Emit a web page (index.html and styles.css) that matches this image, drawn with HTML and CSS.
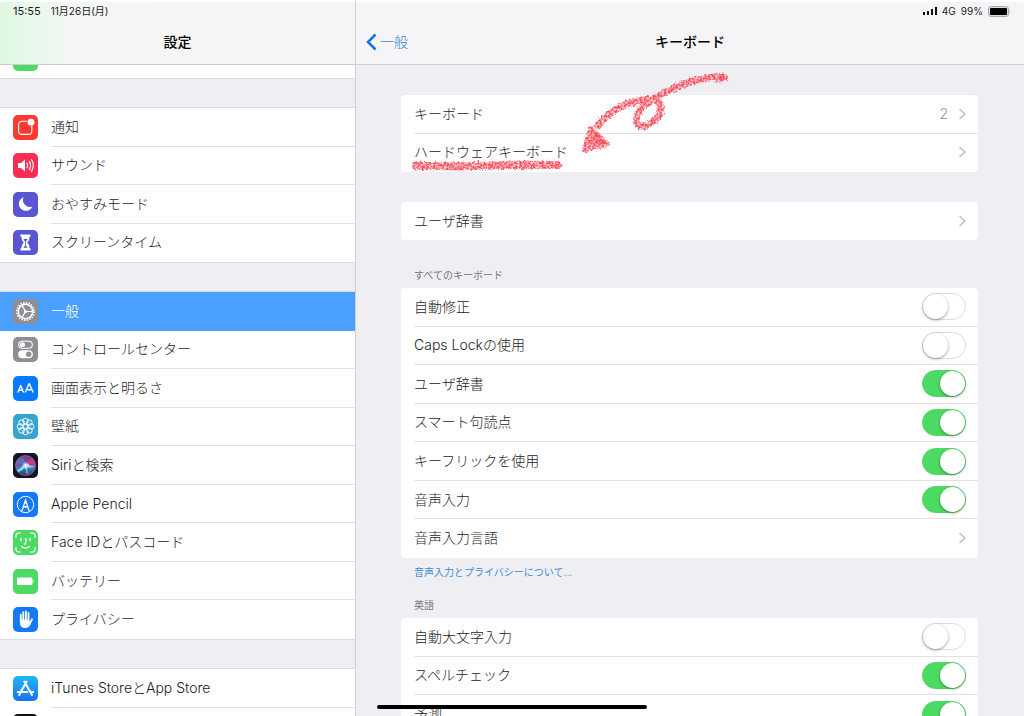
FILE: index.html
```html
<!DOCTYPE html>
<html lang="ja">
<head>
<meta charset="utf-8">
<meta name="viewport" content="width=device-width, initial-scale=1">
<title>設定</title>
<link rel="stylesheet" href="styles.css">
</head>
<body>
<div class="app">
  <aside class="sidebar">
    <header class="bar bar-side">
      <div class="status"><span class="clock">15:55</span><span>11月26日(月)</span></div>
      <h1 class="title">設定</h1>
    </header>
    <nav class="menu">
      <div class="list list-clipped" aria-hidden="true">
        <svg class="icon" viewBox="0 0 25 25"><rect width="25" height="25" rx="5" fill="#4cd964"/></svg>
      </div>
      <div class="list rows-4">
        <a class="item" href="#"><svg class="icon" viewBox="0 0 25 25"><rect width="25" height="25" rx="5" fill="#fb3b30"/><path d="M14.2 6.2H9A3.4 3.4 0 0 0 5.600 9.600V16A3.400 3.400 0 0 0 9 19.400H15.400A3.400 3.400 0 0 0 18.800 16V11" fill="none" stroke="#fff" stroke-width="1.100"/><circle cx="18" cy="7.200" r="3.400" fill="#fff"/></svg><span class="label">通知</span></a>
        <a class="item" href="#"><svg class="icon" viewBox="0 0 25 25"><rect width="25" height="25" rx="5" fill="#fc2d55"/><path d="M5 10h3l4-3.500v12L8 15H5z" fill="#fff"/><path d="M14 10.200q1.500 2.300 0 4.600M16.300 8.400q2.600 4.100 0 8.200M18.500 6.700q3.800 5.800 0 11.600" fill="none" stroke="#fff" stroke-width="1.200" stroke-linecap="round"/></svg><span class="label">サウンド</span></a>
        <a class="item" href="#"><svg class="icon" viewBox="0 0 25 25"><rect width="25" height="25" rx="5" fill="#5a55d2"/><path d="M10.500 5.300A7 7 0 1 0 19.400 14.500A7 7 0 0 1 10.500 5.300Z" fill="#fff"/></svg><span class="label">おやすみモード</span></a>
        <a class="item" href="#"><svg class="icon" viewBox="0 0 25 25"><rect width="25" height="25" rx="5" fill="#5a55d2"/><path d="M7.500 4.500h10v2.300h-1c0 2.700-.6 4.100-2.300 5.700 1.700 1.600 2.300 3 2.300 5.700h1v2.300h-10v-2.300h1c0-2.700.6-4.100 2.300-5.700-1.700-1.600-2.300-3-2.300-5.700h-1z" fill="#fff"/><path d="M10.500 9h4c-.3 1-.8 1.700-1.600 2.400v4.400l1.800 2h-4.400l1.800-2v-4.400c-.8-.7-1.300-1.400-1.600-2.400z" fill="#5a55d2"/></svg><span class="label">スクリーンタイム</span></a>
      </div>
      <div class="list rows-9">
        <a class="item item-selected" href="#" aria-current="page"><svg class="icon" viewBox="0 0 25 25"><rect width="25" height="25" rx="5" fill="#8e8e93"/><g fill="none" stroke="#fff"><circle cx="12.500" cy="12.500" r="8.700" stroke-width="1.700" stroke-dasharray="1.470 1.263"/><circle cx="12.500" cy="12.500" r="7.200" stroke-width="1.500"/><path d="M12.500 12.500H19.500M12.500 12.500L9 6.400M12.500 12.500L9 18.600" stroke-width="1.200"/></g><circle cx="12.500" cy="12.500" r="1.500" fill="#fff"/></svg><span class="label">一般</span></a>
        <a class="item" href="#"><svg class="icon" viewBox="0 0 25 25"><rect width="25" height="25" rx="5" fill="#8e8e93"/><rect x="5.700" y="4.200" width="13.600" height="7" rx="3.500" fill="none" stroke="#fff" stroke-width="1.100"/><circle cx="9.500" cy="7.700" r="2.500" fill="#fff"/><rect x="5.200" y="13.200" width="14.600" height="8" rx="4" fill="#fff"/><circle cx="15.700" cy="17.200" r="2.700" fill="#8e8e93"/></svg><span class="label">コントロールセンター</span></a>
        <a class="item" href="#"><svg class="icon" viewBox="0 0 25 25"><rect width="25" height="25" rx="5" fill="#087aff"/><path d="M4.800 16.500L7.700 9.500L10.600 16.500M5.700 14.300H9.700M12.200 16.500L16.200 7.500L20.200 16.500M13.400 13.700H19" fill="none" stroke="#fff" stroke-width="1.400" stroke-linejoin="round"/></svg><span class="label">画面表示と明るさ</span></a>
        <a class="item" href="#"><svg class="icon" viewBox="0 0 25 25"><rect width="25" height="25" rx="5" fill="#35a5cf"/><g fill="none" stroke="#fff" stroke-width="1"><circle cx="12.500" cy="12.500" r="2.200"/><circle cx="12.500" cy="7" r="2.800"/><circle cx="16.400" cy="8.600" r="2.800"/><circle cx="18" cy="12.500" r="2.800"/><circle cx="16.400" cy="16.400" r="2.800"/><circle cx="12.500" cy="18" r="2.800"/><circle cx="8.600" cy="16.400" r="2.800"/><circle cx="7" cy="12.500" r="2.800"/><circle cx="8.600" cy="8.600" r="2.800"/></g></svg><span class="label">壁紙</span></a>
        <a class="item" href="#"><svg class="icon" viewBox="0 0 25 25"><defs><linearGradient id="siri" x1="0" y1="0" x2="0" y2="1"><stop offset="0" stop-color="#6a3f86"/><stop offset=".4" stop-color="#a83a97"/><stop offset=".65" stop-color="#2a86b5"/><stop offset="1" stop-color="#2b3566"/></linearGradient><radialGradient id="glow"><stop offset="0" stop-color="#fff"/><stop offset=".35" stop-color="#d5f4ff" stop-opacity=".7"/><stop offset="1" stop-color="#fff" stop-opacity="0"/></radialGradient></defs><rect width="25" height="25" rx="5" fill="#161329"/><circle cx="12.500" cy="12.500" r="10" fill="url(#siri)" stroke="#a78bba" stroke-width=".6"/><path d="M3 10Q6 4 11 5L12.500 12Z" fill="#2f9ad0" opacity=".6"/><path d="M14 12L18 5Q22 8 22 12Z" fill="#e23b86" opacity=".6"/><path d="M4 17.500Q9 14 11.500 11L14 11Q18 13 22 13.500Q17 15.500 14 14L14.500 21.500L12 14.500Q8 18.500 5 19Z" fill="#8fe6f2" opacity=".85"/><path d="M14 14L15.500 21.500L12.500 20Z" fill="#f06db5" opacity=".7"/><circle cx="12.800" cy="12.400" r="4" fill="url(#glow)"/></svg><span class="label">Siriと検索</span></a>
        <a class="item" href="#"><svg class="icon" viewBox="0 0 25 25"><rect width="25" height="25" rx="5" fill="#1579f5"/><circle cx="12.500" cy="12.500" r="8.200" fill="none" stroke="#fff" stroke-width="1"/><path d="M8.800 19.300L12.500 8L16.200 19.300M10.300 15.300q1.100-1.500 2.200 0q1.100-1.500 2.200 0" fill="none" stroke="#fff" stroke-width="1.200"/><path d="M12.500 7l1.400 4.800h-2.800z" fill="#fff"/></svg><span class="label">Apple Pencil</span></a>
        <a class="item" href="#"><svg class="icon" viewBox="0 0 25 25"><rect width="25" height="25" rx="5" fill="#4cd964"/><g fill="none" stroke="#fff" stroke-width="1.200" stroke-linecap="round"><path d="M3 7.500V5.500Q3 3 5.500 3H7.500M17.500 3H19.500Q22 3 22 5.500V7.500M22 17.500V19.500Q22 22 19.500 22H17.500M7.500 22H5.500Q3 22 3 19.500V17.500"/><path d="M8 8.500V10.500M17 8.500V10.500M12.800 8.500V13Q12.800 14 11.500 14M8.500 16.600Q12.500 19.700 16.500 16.600" stroke-width="1.300"/></g></svg><span class="label">Face IDとパスコード</span></a>
        <a class="item" href="#"><svg class="icon" viewBox="0 0 25 25"><rect width="25" height="25" rx="5" fill="#4cd964"/><rect x="4" y="8.500" width="15.500" height="7.500" rx="1" fill="#fff"/><path d="M20.200 10.600q1.600 1.600 0 3.300z" fill="#fff"/></svg><span class="label">バッテリー</span></a>
        <a class="item" href="#"><svg class="icon" viewBox="0 0 25 25"><rect width="25" height="25" rx="5" fill="#1579f5"/><g stroke="#fff" stroke-width="1.800" stroke-linecap="round" fill="none"><path d="M7.800 7.600V15M10.300 5.200V14M12.900 4.500V14M15.500 6V15M19 12.300L16.500 17"/></g><path d="M6.900 12.500H16.400V15L18.200 13.700Q17.500 21 12.500 21Q6.900 21 6.900 15.500Z" fill="#fff"/></svg><span class="label">プライバシー</span></a>
      </div>
      <div class="list rows-2">
        <a class="item" href="#"><svg class="icon" viewBox="0 0 25 25"><defs><linearGradient id="store" x1="0" y1="0" x2="0" y2="1"><stop offset="0" stop-color="#1fb7f7"/><stop offset="1" stop-color="#1b72ec"/></linearGradient></defs><rect width="25" height="25" rx="5" fill="url(#store)"/><path d="M13.700 5.500L7.800 15.800M11.300 5.500L19 18.900M4.800 15.900H14.200M17.300 15.900H20.200M7 17.500L6.200 18.900" fill="none" stroke="#fff" stroke-width="2" stroke-linecap="round"/></svg><span class="label">iTunes StoreとApp Store</span></a>
        <div class="item" aria-hidden="true"><svg class="icon" viewBox="0 0 25 25"><rect width="25" height="25" rx="5" fill="#111"/></svg><span class="label"></span></div>
      </div>
    </nav>
  </aside>

  <main class="detail">
    <header class="bar">
      <div class="status status-right">
        <svg class="signal" viewBox="0 0 14 8"><path d="M0 5h2v3H0zM4 4h2v4H4zM8 2h2v6H8zM12 0h2v8h-2z" fill="#111"/></svg>
        <span>4G</span><span>99%</span>
        <svg class="battery" viewBox="0 0 23 11"><rect x=".5" y=".5" width="20" height="10" rx="2.500" fill="#ddd" stroke="#aaa"/><rect x="2" y="2" width="17" height="7" rx="1" fill="#000"/><path d="M21.500 4q1.500 1.500 0 3z" fill="#999"/></svg>
      </div>
      <div class="headline">
        <a class="back" href="#"><svg class="back-arrow" viewBox="0 0 11 18"><path d="M9.500 1.500L2 9L9.500 16.500" fill="none" stroke="#1077df" stroke-width="2.500"/></svg>一般</a>
        <h2 class="title">キーボード</h2>
      </div>
    </header>

    <div class="content">
      <section class="card card-marked rows-2">
        <a class="row" href="#"><span>キーボード</span><span class="value">2</span><svg class="chevron" viewBox="0 0 8 12"><path d="M1.500 1L7 6L1.500 11" fill="none" stroke="#bdbdc2" stroke-width="1.500"/></svg></a>
        <a class="row" href="#"><span>ハードウェアキーボード</span><svg class="chevron" viewBox="0 0 8 12"><path d="M1.500 1L7 6L1.500 11" fill="none" stroke="#bdbdc2" stroke-width="1.500"/></svg></a>
        <svg class="crayon" viewBox="401 65 340 115" aria-hidden="true">
          <defs><filter id="chalk" filterUnits="userSpaceOnUse" x="401" y="65" width="340" height="115">
            <feTurbulence type="fractalNoise" baseFrequency=".45" numOctaves="2" seed="7" result="n"/>
            <feDisplacementMap in="SourceGraphic" in2="n" scale="5" xChannelSelector="R" yChannelSelector="G" result="d"/>
            <feColorMatrix in="n" type="matrix" values="0 0 0 0 0  0 0 0 0 0  0 0 0 0 0  0 0 0 2 -.3" result="m"/>
            <feComposite in="d" in2="m" operator="in"/>
            <feGaussianBlur stdDeviation=".5"/>
          </filter></defs>
          <g filter="url(#chalk)" fill="none" stroke="#f5515f" stroke-linecap="round" stroke-linejoin="round">
            <path d="M723 77C700 76 676 86 656 97C641 105 633 117 638 124C644 131 661 119 661 108C661 98 648 98 638 101C620 105 606 114 598 126" stroke-width="7"/>
            <path d="M716 77.500L724 77.500" stroke-width="8"/>
            <path d="M591 129L606 144L585 149Z" fill="#f5515f" stroke-width="6"/>
            <path d="M416 165.500C450 168 500 164 558 165" stroke-width="8"/>
          </g>
          <path d="M592 129L607 144L598 146Z" fill="#f53b4c" opacity=".4"/>
          <circle cx="722" cy="78" r="3" fill="#f53b4c" opacity=".4"/>
        </svg>
      </section>

      <section class="card rows-1">
        <a class="row" href="#"><span>ユーザ辞書</span><svg class="chevron" viewBox="0 0 8 12"><path d="M1.500 1L7 6L1.500 11" fill="none" stroke="#bdbdc2" stroke-width="1.500"/></svg></a>
      </section>

      <h3 class="caption">すべてのキーボード</h3>
      <section class="card rows-7">
        <label class="row"><span>自動修正</span><input class="switch" type="checkbox" role="switch"></label>
        <label class="row"><span>Caps Lockの使用</span><input class="switch" type="checkbox" role="switch"></label>
        <label class="row"><span>ユーザ辞書</span><input class="switch" type="checkbox" role="switch" checked></label>
        <label class="row"><span>スマート句読点</span><input class="switch" type="checkbox" role="switch" checked></label>
        <label class="row"><span>キーフリックを使用</span><input class="switch" type="checkbox" role="switch" checked></label>
        <label class="row"><span>音声入力</span><input class="switch" type="checkbox" role="switch" checked></label>
        <a class="row" href="#"><span>音声入力言語</span><svg class="chevron" viewBox="0 0 8 12"><path d="M1.500 1L7 6L1.500 11" fill="none" stroke="#bdbdc2" stroke-width="1.500"/></svg></a>
      </section>
      <a class="footnote" href="#">音声入力とプライバシーについて...</a>

      <h3 class="caption caption-near">英語</h3>
      <section class="card rows-3">
        <label class="row"><span>自動大文字入力</span><input class="switch" type="checkbox" role="switch"></label>
        <label class="row"><span>スペルチェック</span><input class="switch" type="checkbox" role="switch" checked></label>
        <label class="row"><span>予測</span><input class="switch" type="checkbox" role="switch" checked></label>
      </section>
    </div>
  </main>
  <div class="home-indicator"></div>
</div>
</body>
</html>
```
FILE: styles.css
```css
* {
  box-sizing: border-box;
}

body {
  margin: 0;
  color: #1c1c1e;
  background: #eeeef3;
  font-family: Inter, "Noto Sans CJK JP", sans-serif;
  font-size: 14px;
  font-weight: 300;
  line-height: 20px;
}

a {
  color: inherit;
  text-decoration: none;
}

h1, h2, h3 {
  margin: 0;
  font: inherit;
}

svg {
  display: block;
  flex: none;
}

.app {
  position: relative;
  display: flex;
  height: 100vh;
  overflow: hidden;
}

.sidebar {
  display: flex;
  flex-direction: column;
  flex: 0 0 356px;
  border-right: 1px solid #cfcfd4;
}

.detail {
  display: flex;
  flex-direction: column;
  flex: 1;
  min-width: 0;
}

/* Top bars */
.bar {
  flex: none;
  background: #f5f5f7;
  border-top: 2px solid #fff;
  border-bottom: 1px solid #cdcdd3;
}

.bar-side {
  background: linear-gradient(90deg, #dff8e4 0, #e6f8ea 30px, #f4f6f4 68px, #f6f6f6 100%);
}

.status {
  display: flex;
  align-items: center;
  gap: 10px;
  height: 18px;
  padding: 0 13px;
  font-size: 10px;
  font-weight: 400;
}

.clock {
  font-size: 11px;
}

.status-right {
  justify-content: flex-end;
  gap: 5px;
}

.signal {
  width: 14px;
  height: 8px;
}

.battery {
  width: 23px;
  height: 11px;
}

.title {
  color: #000;
  font-weight: 500;
  line-height: 44px;
  text-align: center;
}

.headline {
  position: relative;
}

.back {
  position: absolute;
  left: 10px;
  top: 0;
  display: flex;
  align-items: center;
  gap: 3px;
  height: 44px;
  color: #2f83cf;
}

.back-arrow {
  width: 11px;
  height: 18px;
}

/* Sidebar menu */
.menu {
  flex: 1;
  overflow: hidden;
}

.list {
  display: grid;
  grid-auto-rows: 1fr;
  margin-bottom: 30px;
  background: #fff;
  box-shadow: 0 1px 0 #dcdce0, 0 -1px 0 #dcdce0;
}

.list-clipped {
  display: flex;
  align-items: flex-end;
  height: 13px;
  padding: 0 0 7px 13px;
  overflow: hidden;
}

.item {
  display: flex;
  align-items: center;
  gap: 13px;
  padding-left: 13px;
}

.icon {
  width: 25px;
  height: 25px;
}

.label {
  display: flex;
  align-items: center;
  align-self: stretch;
  flex: 1;
  border-bottom: 1px solid #e1e1e4;
}

.item:last-child .label {
  border-bottom-color: transparent;
}

.item-selected {
  color: #fff;
  background: #4a9fff;
}

.item-selected .label {
  border-bottom-color: transparent;
}

/* Group heights by number of rows */
.rows-1 { min-height: 38px; }
.rows-2 { min-height: 77px; }
.rows-3 { min-height: 116px; }
.rows-4 { min-height: 154px; }
.rows-7 { min-height: 270px; }
.rows-9 { min-height: 347px; }

/* Settings groups */
.content {
  flex: 1;
  padding: 30px 46px 0 45px;
  overflow: hidden;
}

.card {
  display: grid;
  grid-auto-rows: 1fr;
  background: #fff;
  border-radius: 4px;
}

.card-marked {
  position: relative;
  margin-bottom: 30px;
}

.row {
  display: flex;
  align-items: center;
  margin-left: 13px;
  padding-right: 12px;
  border-bottom: 1px solid #e1e1e4;
}

.row:last-of-type {
  border-bottom-color: transparent;
}

label.row:not(:last-child) {
  border-bottom-color: #e1e1e4;
}

.row > :first-child {
  flex: 1;
}

.value {
  margin-right: 10px;
  color: #8e8e93;
}

.chevron {
  width: 8px;
  height: 12px;
}

.caption {
  padding: 29px 13px 7px;
  color: #77777c;
  font-size: 10px;
  font-weight: 400;
  line-height: 12px;
}

.caption-near {
  padding-top: 21px;
}

.footnote {
  display: block;
  padding: 8px 13px 0;
  color: #3f8fd6;
  font-size: 10px;
  font-weight: 400;
  line-height: 12px;
}

.switch {
  appearance: none;
  width: 44px;
  height: 27px;
  margin: 0;
  border: 1px solid #dcdcdf;
  border-radius: 14px;
  background: #fff;
}

.switch::before {
  content: "";
  display: block;
  width: 25px;
  height: 25px;
  border-radius: 50%;
  background: #fff;
  box-shadow: 0 1px 3px rgba(0, 0, 0, 0.4);
}

.switch:checked {
  border-color: #4cd964;
  background: #4cd964;
}

.switch:checked::before {
  margin-left: 17px;
}

/* Hand-drawn highlight over the first group */
.crayon {
  position: absolute;
  left: 0;
  top: -30px;
  width: 340px;
  height: 115px;
  pointer-events: none;
}

.home-indicator {
  position: absolute;
  left: 50%;
  bottom: 7px;
  width: 270px;
  height: 4px;
  margin-left: -135px;
  border-radius: 2px;
  background: #000;
}
```
